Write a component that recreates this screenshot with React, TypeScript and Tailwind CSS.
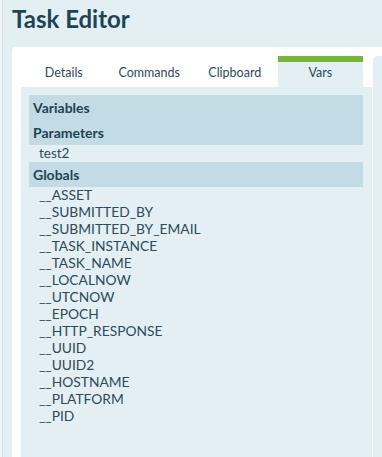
import React from "react";

const globals = [
  "__ASSET",
  "__SUBMITTED_BY",
  "__SUBMITTED_BY_EMAIL",
  "__TASK_INSTANCE",
  "__TASK_NAME",
  "__LOCALNOW",
  "__UTCNOW",
  "__EPOCH",
  "__HTTP_RESPONSE",
  "__UUID",
  "__UUID2",
  "__HOSTNAME",
  "__PLATFORM",
  "__PID",
];

const tabs = ["Details", "Commands", "Clipboard", "Vars"];

export default function App() {
  return (
    <div
      className="flex h-[457px] w-[382px] overflow-hidden bg-[#e4eff4] text-[#1f4350]"
      style={{ fontFamily: "Lato, 'Liberation Sans', sans-serif" }}
    >
      <div className="w-[2px] shrink-0 bg-[#eef3f6]" />
      <div className="w-px shrink-0 bg-[#d6dfe4]" />
      <div className="flex min-w-0 flex-1 flex-col pl-[9px]">
        <h1 className="h-[47px] pt-[2px] text-[24px] font-bold leading-[34px] text-[#1d4453]">
          Task Editor
        </h1>
        <div className="flex flex-1 rounded-tl-[4px] bg-white pl-[9px]">
          <div className="flex w-[351px] shrink-0 flex-col">
            <div className="flex h-[40px] w-[342px] items-end">
              {tabs.map((t) => (
                <div
                  key={t}
                  className={
                    t === "Vars"
                      ? "flex h-[31px] flex-1 items-center justify-center border-t-[6px] border-[#77b633] bg-[#e4eff4] pb-[2px] text-[12.5px] text-[#2c4a57]"
                      : "flex h-[31px] flex-1 items-center justify-center pt-[4px] text-[12.5px] text-[#2c4a57]"
                  }
                >
                  {t}
                </div>
              ))}
            </div>
            <div className="flex-1 bg-[#e4eff4] px-[8px] pt-[8px]">
              <div className="bg-[#c2dbe4] w-[334px]">
                <div className="flex h-[25px] items-center px-[4px] text-[14px] font-bold text-[#1d4453]">
                  Variables
                </div>
                <div className="flex h-[25px] items-center px-[4px] text-[14px] font-bold text-[#1d4453]">
                  Parameters
                </div>
              </div>
              <div className="flex h-[17px] items-center pl-[10px] text-[13.5px] text-[#2c4a57]">
                test2
              </div>
              <div className="flex h-[25px] w-[334px] items-center bg-[#c2dbe4] px-[4px] text-[14px] font-bold text-[#1d4453]">
                Globals
              </div>
              {globals.map((g) => (
                <div
                  key={g}
                  className="flex h-[17px] items-center pl-[10px] text-[13.8px] text-[#2c4a57]"
                >
                  {g}
                </div>
              ))}
            </div>
          </div>
          <div className="ml-px mt-[9px] flex-1 rounded-tl-[5px] bg-[#e4eff4]" />
        </div>
      </div>
    </div>
  );
}
